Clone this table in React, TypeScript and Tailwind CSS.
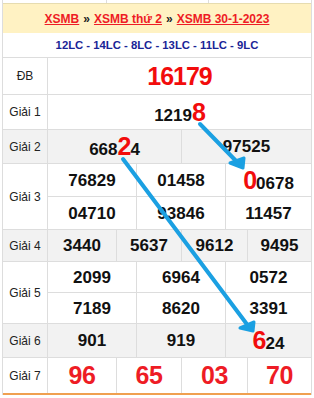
import React from 'react';

type Part = { t: string; big?: boolean };

const font = { fontFamily: '"Liberation Sans", Arial, sans-serif' };

const Num: React.FC<{ parts: Part[] }> = ({ parts }) => (
  <span className="text-[17px] font-bold text-[#111] leading-none">
    {parts.map((p, i) =>
      p.big ? (
        <span key={i} className="text-[25px] text-[#f20c0c] tracking-[-1px]">
          {p.t}
        </span>
      ) : (
        <span key={i}>{p.t}</span>
      ),
    )}
  </span>
);

const Cell: React.FC<{ w: string; first?: boolean; children: React.ReactNode }> = ({ w, first, children }) => (
  <div className={`${w} flex items-center justify-center ${first ? '' : 'border-l border-[#ddd]'}`}>{children}</div>
);

const Label: React.FC<{ text: string }> = ({ text }) => (
  <div className="w-[45px] shrink-0 border-r border-[#ddd] flex items-center justify-center text-[12px] text-[#222]">
    {text}
  </div>
);

const Row: React.FC<{ label: string; h: string; gray?: boolean; children: React.ReactNode }> = ({
  label,
  h,
  gray,
  children,
}) => (
  <div className={`flex ${h} border-b border-[#ddd] ${gray ? 'bg-[#f2f2f2]' : 'bg-white'}`}>
    <Label text={label} />
    <div className="flex-1 flex flex-col">{children}</div>
  </div>
);

const w3 = ['w-[88px]', 'w-[89px]', 'flex-1'];
const w4 = ['w-[68px]', 'w-[65px]', 'w-[66px]', 'flex-1'];

const Line3: React.FC<{ items: Part[][]; last?: boolean }> = ({ items, last }) => (
  <div className={`flex flex-1 ${last ? '' : 'border-b border-[#ddd]'}`}>
    {items.map((p, i) => (
      <Cell key={i} w={w3[i]} first={i === 0}>
        <Num parts={p} />
      </Cell>
    ))}
  </div>
);

const Line4: React.FC<{ items: string[]; red?: boolean }> = ({ items, red }) => (
  <div className="flex flex-1">
    {items.map((t, i) => (
      <Cell key={i} w={w4[i]} first={i === 0}>
        {red ? (
          <span className="text-[25px] font-bold text-[#ee1c25] tracking-[-0.5px] leading-none">{t}</span>
        ) : (
          <Num parts={[{ t }]} />
        )}
      </Cell>
    ))}
  </div>
);

export default function App() {
  return (
    <div className="relative w-[314px] h-[398px] bg-white overflow-hidden" style={font}>
      <div className="ml-[2px] w-[310px] border-x border-[#ddd]">
        <div className="flex h-[3px]">
          <div className="w-[104px] border-r border-[#ddd]" />
          <div className="w-[102px] border-r border-[#ddd]" />
          <div className="flex-1" />
        </div>
        <div className="h-[30px] bg-[#fff2c3] border-t border-[#e6dcb0] flex items-center justify-center text-[12px] font-bold">
          <a className="text-[#ee1c25] underline">XSMB</a>
          <span className="mx-[4px] text-[#222]">»</span>
          <a className="text-[#ee1c25] underline">XSMB thứ 2</a>
          <span className="mx-[4px] text-[#222]">»</span>
          <a className="text-[#ee1c25] underline">XSMB 30-1-2023</a>
        </div>
        <div className="h-[25px] border-b border-[#ddd] flex items-center justify-center text-[11.3px] font-bold text-[#1a2496]">
          12LC - 14LC - 8LC - 13LC - 11LC - 9LC
        </div>

        <Row label="ĐB" h="h-[37px]">
          <div className="flex-1 flex items-center justify-center">
            <span className="text-[25px] font-bold text-[#f20c0c] tracking-[-1px] leading-none">16179</span>
          </div>
        </Row>
        <Row label="Giải 1" h="h-[35px]">
          <div className="flex-1 flex items-center justify-center">
            <Num parts={[{ t: '1219' }, { t: '8', big: true }]} />
          </div>
        </Row>
        <Row label="Giải 2" h="h-[34px]" gray>
          <div className="flex flex-1">
            <Cell w="w-[133px]" first>
              <Num parts={[{ t: '668' }, { t: '2', big: true }, { t: '4' }]} />
            </Cell>
            <Cell w="flex-1">
              <Num parts={[{ t: '97525' }]} />
            </Cell>
          </div>
        </Row>
        <Row label="Giải 3" h="h-[66px]">
          <Line3 items={[[{ t: '76829' }], [{ t: '01458' }], [{ t: '0', big: true }, { t: '0678' }]]} />
          <Line3 last items={[[{ t: '04710' }], [{ t: '93846' }], [{ t: '11457' }]]} />
        </Row>
        <Row label="Giải 4" h="h-[32px]" gray>
          <Line4 items={['3440', '5637', '9612', '9495']} />
        </Row>
        <Row label="Giải 5" h="h-[62px]">
          <Line3 items={[[{ t: '2099' }], [{ t: '6964' }], [{ t: '0572' }]]} />
          <Line3 last items={[[{ t: '7189' }], [{ t: '8620' }], [{ t: '3391' }]]} />
        </Row>
        <Row label="Giải 6" h="h-[34px]" gray>
          <Line3 last items={[[{ t: '901' }], [{ t: '919' }], [{ t: '6', big: true }, { t: '24' }]]} />
        </Row>
        <div className="flex h-[37px] bg-white border-b-2 border-b-[#f0a050]">
          <Label text="Giải 7" />
          <div className="flex-1 flex">
            <Line4 red items={['96', '65', '03', '70']} />
          </div>
        </div>
      </div>

      <svg className="absolute inset-0 pointer-events-none" width="314" height="398" viewBox="0 0 314 398">
        <g stroke="#1ba0e2" strokeWidth="4" strokeLinecap="round" fill="#1ba0e2">
          <line x1="200" y1="124" x2="239" y2="164" />
          <polygon points="243,168 230,163 244,158" strokeWidth="3" strokeLinejoin="round" />
          <line x1="123" y1="159" x2="249" y2="327" />
          <polygon points="253,331 240,328 254,322" strokeWidth="3" strokeLinejoin="round" />
        </g>
      </svg>
    </div>
  );
}
